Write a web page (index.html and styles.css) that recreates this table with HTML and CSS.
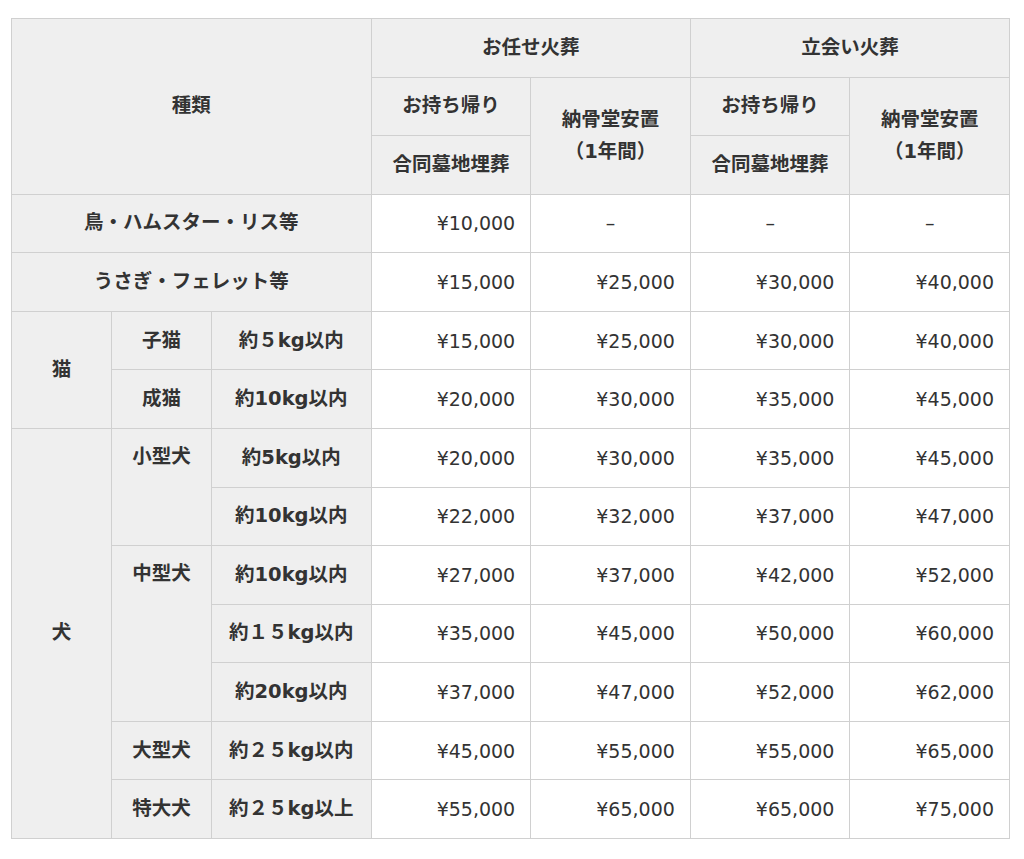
FILE: index.html
```html
<!DOCTYPE html>
<html lang="ja">
<head>
<meta charset="utf-8">
<link rel="stylesheet" href="styles.css">
</head>
<body>
<table class="price">
  <colgroup>
    <col class="c-sm"><col class="c-sm"><col class="c-md">
    <col class="c-md"><col class="c-md"><col class="c-md"><col class="c-md">
  </colgroup>
  <tr>
    <th colspan="3" rowspan="3">種類</th>
    <th colspan="2">お任せ火葬</th>
    <th colspan="2">立会い火葬</th>
  </tr>
  <tr>
    <th>お持ち帰り</th>
    <th rowspan="2">納骨堂安置<br>（1年間）</th>
    <th>お持ち帰り</th>
    <th rowspan="2">納骨堂安置<br>（1年間）</th>
  </tr>
  <tr>
    <th>合同墓地埋葬</th>
    <th>合同墓地埋葬</th>
  </tr>
  <tr>
    <th colspan="3">鳥・ハムスター・リス等</th>
    <td>¥10,000</td><td class="dash">–</td><td class="dash">–</td><td class="dash">–</td>
  </tr>
  <tr>
    <th colspan="3">うさぎ・フェレット等</th>
    <td>¥15,000</td><td>¥25,000</td><td>¥30,000</td><td>¥40,000</td>
  </tr>
  <tr>
    <th rowspan="2">猫</th><th>子猫</th><th>約５kg以内</th>
    <td>¥15,000</td><td>¥25,000</td><td>¥30,000</td><td>¥40,000</td>
  </tr>
  <tr>
    <th>成猫</th><th>約10kg以内</th>
    <td>¥20,000</td><td>¥30,000</td><td>¥35,000</td><td>¥45,000</td>
  </tr>
  <tr>
    <th rowspan="7">犬</th><th rowspan="2" class="top">小型犬</th><th>約5kg以内</th>
    <td>¥20,000</td><td>¥30,000</td><td>¥35,000</td><td>¥45,000</td>
  </tr>
  <tr>
    <th>約10kg以内</th>
    <td>¥22,000</td><td>¥32,000</td><td>¥37,000</td><td>¥47,000</td>
  </tr>
  <tr>
    <th rowspan="3" class="top">中型犬</th><th>約10kg以内</th>
    <td>¥27,000</td><td>¥37,000</td><td>¥42,000</td><td>¥52,000</td>
  </tr>
  <tr>
    <th>約１５kg以内</th>
    <td>¥35,000</td><td>¥45,000</td><td>¥50,000</td><td>¥60,000</td>
  </tr>
  <tr>
    <th>約20kg以内</th>
    <td>¥37,000</td><td>¥47,000</td><td>¥52,000</td><td>¥62,000</td>
  </tr>
  <tr>
    <th>大型犬</th><th>約２５kg以内</th>
    <td>¥45,000</td><td>¥55,000</td><td>¥55,000</td><td>¥65,000</td>
  </tr>
  <tr>
    <th>特大犬</th><th>約２５kg以上</th>
    <td>¥55,000</td><td>¥65,000</td><td>¥65,000</td><td>¥75,000</td>
  </tr>
</table>
</body>
</html>
```

FILE: styles.css
```css
html, body {
  margin: 0;
  padding: 0;
  background: #ffffff;
}
body {
  padding: 18px 0 0 11px;
  font-family: "DejaVu Sans", "Noto Sans CJK JP", sans-serif;
  color: #333333;
}
.price {
  border-collapse: collapse;
  table-layout: fixed;
  width: 998px;
}
.c-sm { width: 100px; }
.c-md { width: 159.6px; }
.price tr {
  height: 58.57px;
}
.price th,
.price td {
  border: 1px solid #d0d0d0;
  padding: 0 15px;
  line-height: 32px;
  vertical-align: middle;
}
.price th {
  background: #efefef;
  font-weight: bold;
  font-size: 19.5px;
  text-align: center;
}
.price td {
  background: #ffffff;
  font-size: 19px;
  text-align: right;
}
.price td.dash {
  text-align: center;
}
.price th.top {
  vertical-align: top;
  padding-top: 12px;
}
```
